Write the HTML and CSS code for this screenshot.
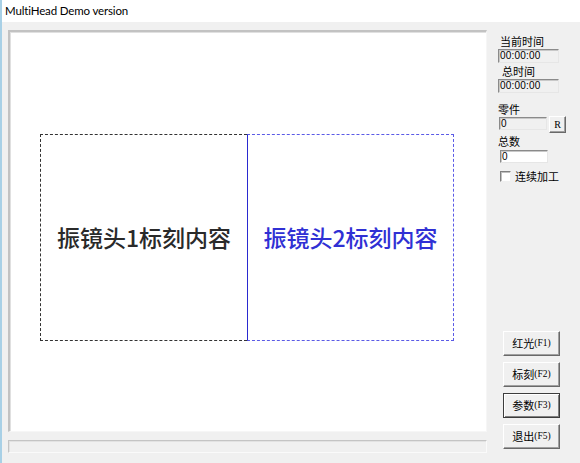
FILE: index.html
```html
<!DOCTYPE html>
<html lang="zh-CN">
<head>
<meta charset="utf-8">
<title>MultiHead Demo version</title>
<link rel="stylesheet" href="styles.css">
</head>
<body>
<div class="win">
  <div class="titlebar">MultiHead Demo version</div>
  <div class="client">
    <div class="leftcol">
      <div class="canvas">
        <div class="heads">
          <div class="head h1">振镜头1标刻内容</div>
          <div class="head h2">振镜头2标刻内容</div>
        </div>
      </div>
      <div class="status"></div>
    </div>
    <div class="side">
      <div class="lbl lbl1">当前时间</div>
      <div class="edit ro wide b1">00:00:00</div>
      <div class="lbl lbl2">总时间</div>
      <div class="edit ro wide b2">00:00:00</div>
      <div class="lbl lbl3">零件</div>
      <div class="row3">
        <div class="edit ro part">0</div>
        <div class="rbtn">R</div>
      </div>
      <div class="lbl lbl4">总数</div>
      <div class="edit total">0</div>
      <div class="chkrow">
        <span class="chk"></span>
        <span class="chklbl">连续加工</span>
      </div>
      <div class="btns">
        <div class="btn">红光<span class="fk">(F1)</span></div>
        <div class="btn">标刻<span class="fk">(F2)</span></div>
        <div class="btn def">参数<span class="fk">(F3)</span></div>
        <div class="btn">退出<span class="fk">(F5)</span></div>
      </div>
    </div>
  </div>
</div>
</body>
</html>
```
FILE: styles.css
```css
html, body {
  margin: 0;
  padding: 0;
  background: #f0f0f0;
}
.win {
  width: 580px;
  height: 463px;
  box-sizing: border-box;
  border-left: 2px solid #a8d0e6;
  display: flex;
  flex-direction: column;
  overflow: hidden;
}
.titlebar {
  height: 22px;
  background: #ffffff;
  font-family: "Lato", "Liberation Sans", sans-serif;
  font-size: 11.5px;
  letter-spacing: -0.15px;
  line-height: 22px;
  color: #000;
  padding-left: 3px;
  flex: none;
}
.client {
  flex: 1;
  background: #f0f0f0;
  display: flex;
}
.leftcol {
  margin-left: 6px;
  padding-top: 8px;
  display: flex;
  flex-direction: column;
}
.canvas {
  width: 479px;
  height: 402px;
  box-sizing: border-box;
  background: #ffffff;
  border-style: solid;
  border-width: 2px 1px 1px 2px;
  border-color: #c2c2c2 #f6f6f6 #f6f6f6 #c2c2c2;
  box-shadow: inset 1px 1px 0 #e0e0e0;
  padding: 102px 0 0 30px;
}
.heads {
  display: flex;
  height: 207px;
}
.head {
  box-sizing: border-box;
  height: 207px;
  width: 207px;
  display: flex;
  align-items: center;
  justify-content: center;
  font-family: "Noto Sans CJK SC", "Liberation Sans", sans-serif;
  font-size: 23px;
  font-weight: 500;
  padding-bottom: 2px;
}
.h1 {
  border-top: 1px dashed #333333;
  border-left: 1px dashed #333333;
  border-bottom: 1px dashed #333333;
  color: #2a2a2a;
}
.h2 {
  border-top: 1px dashed #5a5ae6;
  border-right: 1px dashed #5a5ae6;
  border-bottom: 1px dashed #5a5ae6;
  border-left: 1px solid #2a2ad0;
  color: #3030d4;
}
.status {
  margin-top: 8px;
  width: 479px;
  height: 13px;
  box-sizing: border-box;
  border-style: solid;
  border-width: 1px;
  border-color: #c4c4c4 #fafafa #fafafa #c4c4c4;
  box-shadow: inset 1px 1px 0 #e2e2e2;
}
.side {
  flex: 1;
  padding-left: 11px;
  display: flex;
  flex-direction: column;
  font-family: "Noto Sans CJK SC", "Liberation Sans", sans-serif;
  font-size: 11px;
  color: #000;
}
.lbl {
  height: 14px;
  line-height: 14px;
}
.lbl1 { margin-top: 12px; margin-left: 2px; }
.lbl2 { margin-top: 1px; margin-left: 4px; }
.lbl3 { margin-top: 9px; margin-left: 0; }
.lbl4 { margin-top: 1px; margin-left: 0; }
.edit {
  box-sizing: border-box;
  border-style: solid;
  border-width: 1px;
  border-color: #8a8a8a #e6e6e6 #e6e6e6 #8a8a8a;
  box-shadow: inset 1px 1px 0 #c8c8c8;
  font-family: "Liberation Sans", sans-serif;
  font-size: 10px;
  line-height: 12px;
  padding-left: 1px;
  letter-spacing: 0.2px;
  color: #000;
}
.ro { background: #f0f0f0; }
.wide {
  width: 61px;
  height: 14px;
  margin-top: 1px;
}
.row3 {
  display: flex;
  align-items: flex-start;
  margin-left: 1px;
}
.part {
  width: 48px;
  height: 13px;
  margin-top: 1px;
}
.rbtn {
  margin-left: 2px;
  width: 17px;
  height: 17px;
  box-sizing: border-box;
  border-style: solid;
  border-width: 1px;
  border-color: #ffffff #696969 #696969 #ffffff;
  box-shadow: inset -1px -1px 0 #a0a0a0;
  font-family: "Liberation Serif", serif;
  font-size: 10px;
  line-height: 15px;
  text-align: center;
}
.total {
  background: #ffffff;
  width: 48px;
  height: 13px;
  margin-top: 2px;
  margin-left: 2px;
}
.chkrow {
  margin-top: 7px;
  margin-left: 2px;
  height: 12px;
  display: flex;
  align-items: center;
}
.chk {
  width: 9px;
  height: 9px;
  background: #ffffff;
  border-style: solid;
  border-width: 1px;
  border-color: #808080 #f0f0f0 #f0f0f0 #808080;
  box-shadow: inset 1px 1px 0 #c0c0c0;
}
.chklbl {
  margin-left: 4px;
  line-height: 12px;
}
.btns {
  margin-top: 149px;
  margin-left: 5px;
  display: flex;
  flex-direction: column;
  gap: 6px;
}
.btn {
  width: 57px;
  height: 25px;
  box-sizing: border-box;
  border-style: solid;
  border-width: 1px;
  border-color: #ffffff #696969 #696969 #ffffff;
  box-shadow: inset -1px -1px 0 #a0a0a0;
  display: flex;
  align-items: center;
  justify-content: center;
  font-size: 11px;
  padding-bottom: 1px;
}
.btn.def {
  border-color: #3c3c3c;
  box-shadow: inset 1px 1px 0 #ffffff, inset -1px -1px 0 #808080;
}
.fk {
  font-family: "Liberation Serif", serif;
  font-size: 9.5px;
}
```
